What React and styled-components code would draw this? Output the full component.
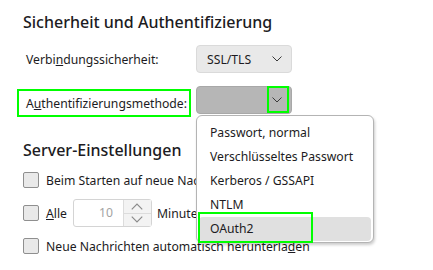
import React from 'react';
import styled, { createGlobalStyle } from 'styled-components';

const GlobalStyle = createGlobalStyle`
  html, body {
    margin: 0;
    padding: 0;
    background: #ffffff;
  }
  body {
    font-family: "Noto Sans", "Open Sans", sans-serif;
    color: #1c1b22;
    font-size: 12.2px;
  }
`;

const Page = styled.div`
  width: 433px;
  height: 270px;
  overflow: hidden;
  padding: 12px 0 0 23px;
  box-sizing: border-box;
  position: relative;
`;

const Heading = styled.h2`
  margin: 0;
  font-size: 16px;
  font-weight: 500;
  line-height: 20px;
  margin-top: ${(p) => p.$top || 0}px;
`;

const FormGrid = styled.div`
  display: grid;
  grid-template-columns: 173px auto;
  row-gap: 13px;
  align-items: center;
  margin-top: 13px;
`;

const Label = styled.label`
  display: flex;
  align-items: center;
  height: 28px;
  margin-left: -6px;
  padding-left: 7px;
  width: 174px;
  box-sizing: border-box;
  border: 2px solid ${(p) => (p.$marked ? '#00ff00' : 'transparent')};
  position: relative;
  top: ${(p) => (p.$marked ? 3 : 0)}px;
`;

const SelectWrap = styled.div`
  position: relative;
  width: 96px;
`;

const Select = styled.div`
  display: flex;
  align-items: center;
  justify-content: space-between;
  height: 28px;
  width: 96px;
  box-sizing: border-box;
  padding: 0 9px 0 10px;
  border-radius: 4px;
  border: 1px solid ${(p) => (p.$open ? '#a8a8a8' : '#dadada')};
  background: ${(p) => (p.$open ? '#b6b6b6' : '#e9e9e9')};
  position: relative;
`;

const ChevronMark = styled.div`
  position: absolute;
  top: -1px;
  right: 2px;
  width: 22px;
  height: 27px;
  box-sizing: border-box;
  border: 2px solid #00ff00;
`;

const Menu = styled.div`
  position: absolute;
  top: 29px;
  left: 0;
  width: 178px;
  box-sizing: border-box;
  padding: 5px 2px 1px 2px;
  background: #ffffff;
  border: 1px solid #b4b4b4;
  border-radius: 6px;
  box-shadow: 1px 2px 3px rgba(0, 0, 0, 0.2);
  z-index: 2;
`;

const MenuItem = styled.div`
  position: relative;
  height: 24px;
  line-height: 24px;
  padding-left: 11px;
  border-radius: 4px;
  background: ${(p) => (p.$active ? '#e0e0e0' : 'transparent')};
  white-space: nowrap;
`;

const ItemMark = styled.div`
  position: absolute;
  top: -5px;
  left: -1px;
  width: 115px;
  height: 31px;
  box-sizing: border-box;
  border: 2px solid #00ff00;
`;

const CheckList = styled.div`
  display: flex;
  flex-direction: column;
  gap: 11px;
  margin-top: 9px;
`;

const CheckRow = styled.div`
  display: flex;
  align-items: center;
  height: 22px;
  white-space: nowrap;
`;

const Box = styled.span`
  width: 16px;
  height: 16px;
  box-sizing: border-box;
  border: 1px solid #8f8f8f;
  border-radius: 2px;
  background: #e9e9e9;
  margin-right: 7px;
  flex-shrink: 0;
`;

const NumberField = styled.div`
  display: flex;
  height: 28px;
  width: 79px;
  box-sizing: border-box;
  border: 1px solid #d4d4d4;
  border-radius: 3px;
  margin: 0 5px 0 6px;
`;

const NumberValue = styled.div`
  flex: 1;
  text-align: right;
  padding-right: 10px;
  line-height: 26px;
  color: #a3a3a3;
`;

const Spinner = styled.div`
  display: flex;
  flex-direction: column;
  width: 27px;
  border-left: 1px solid #dcdcdc;
`;

const SpinButton = styled.div`
  flex: 1;
  display: flex;
  align-items: center;
  justify-content: center;
  background: #f3f3f3;
  border-top: ${(p) => (p.$down ? '1px solid #dcdcdc' : 'none')};
`;

const Chevron = ({ up, color = '#3a3a3a', w = 10 }) => (
  <svg width={w} height={w / 2 + 1} viewBox="0 0 10 6" fill="none">
    <polyline
      points={up ? '0.5,5.5 5,1 9.5,5.5' : '0.5,0.5 5,5 9.5,0.5'}
      stroke={color}
      strokeWidth="1"
    />
  </svg>
);

export default function App() {
  return (
    <>
      <GlobalStyle />
      <Page>
        <Heading>Sicherheit und Authentifizierung</Heading>
        <FormGrid>
          <Label>
            <span>
              Verbi<u>n</u>dungssicherheit:
            </span>
          </Label>
          <SelectWrap>
            <Select>
              <span>SSL/TLS</span>
              <Chevron />
            </Select>
          </SelectWrap>
          <Label $marked>
            <span>
              A<u>u</u>thentifizierungsmethode:
            </span>
          </Label>
          <SelectWrap>
            <Select $open>
              <span />
              <Chevron />
              <ChevronMark />
            </Select>
            <Menu>
              <MenuItem>Passwort, normal</MenuItem>
              <MenuItem>Verschlüsseltes Passwort</MenuItem>
              <MenuItem>Kerberos / GSSAPI</MenuItem>
              <MenuItem>NTLM</MenuItem>
              <MenuItem $active>
                OAuth2
                <ItemMark />
              </MenuItem>
            </Menu>
          </SelectWrap>
        </FormGrid>

        <Heading $top={26}>Server-Einstellungen</Heading>
        <CheckList>
          <CheckRow>
            <Box />
            <span>Beim Starten auf neue Nachrichten prüfen</span>
          </CheckRow>
          <CheckRow>
            <Box />
            <span>
              <u>A</u>lle
            </span>
            <NumberField>
              <NumberValue>10</NumberValue>
              <Spinner>
                <SpinButton>
                  <Chevron up color="#8a8a8a" w={12} />
                </SpinButton>
                <SpinButton $down>
                  <Chevron color="#8a8a8a" w={12} />
                </SpinButton>
              </Spinner>
            </NumberField>
            <span>Minuten nach neuen Nachrichten</span>
          </CheckRow>
          <CheckRow>
            <Box />
            <span>
              Neue Nachrichten automatisch herunterla<u>d</u>en
            </span>
          </CheckRow>
        </CheckList>
      </Page>
    </>
  );
}
